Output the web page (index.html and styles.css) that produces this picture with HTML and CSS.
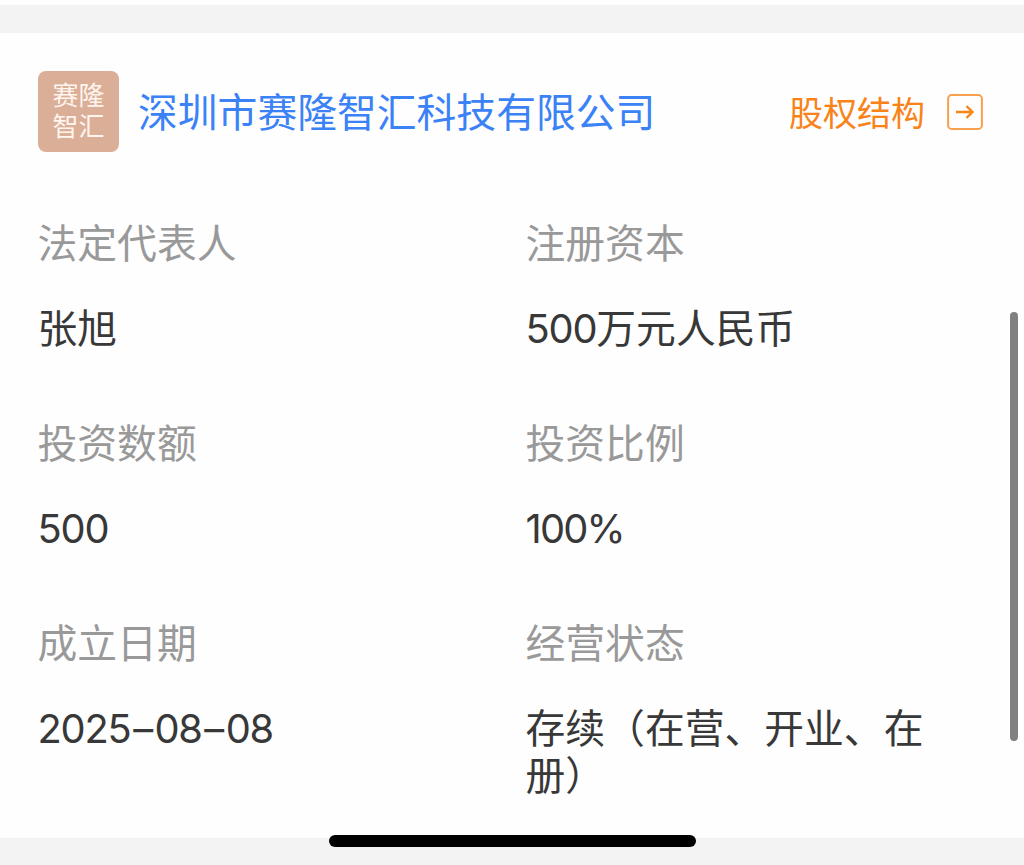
FILE: index.html
```html
<!DOCTYPE html>
<html lang="zh-CN">
<head>
    <meta charset="UTF-8">
    <meta name="viewport" content="width=device-width, initial-scale=1.0">
    <title>深圳市赛隆智汇科技有限公司</title>
    <link rel="stylesheet" href="styles.css">
</head>
<body>
    <div class="separator"></div>

    <main class="card">
        <header class="company">
            <div class="logo">赛隆<br>智汇</div>
            <h1>深圳市赛隆智汇科技有限公司</h1>
            <a class="structure" href="#">
                <span>股权结构</span>
                <svg width="36" height="36" viewBox="0 0 36 36" fill="none" stroke="currentColor">
                    <rect class="frame" x="1.1" y="1.1" width="33.8" height="33.8" rx="3.5" stroke-width="2"/>
                    <path d="M9 18H25.5M19.5 12.2L25.5 18L19.5 23.8" stroke-width="2.3"/>
                </svg>
            </a>
        </header>

        <dl class="details">
            <div class="item">
                <dt>法定代表人</dt>
                <dd>张旭</dd>
            </div>
            <div class="item">
                <dt>注册资本</dt>
                <dd><span class="num">500</span>万元人民币</dd>
            </div>
            <div class="item">
                <dt>投资数额</dt>
                <dd><span class="num">500</span></dd>
            </div>
            <div class="item">
                <dt>投资比例</dt>
                <dd><span class="num percent">100%</span></dd>
            </div>
            <div class="item">
                <dt>成立日期</dt>
                <dd><span class="num">2025<span class="dash">–</span>08<span class="dash">–</span>08</span></dd>
            </div>
            <div class="item">
                <dt>经营状态</dt>
                <dd>存续（在营、开业、在册）</dd>
            </div>
        </dl>
    </main>

    <div class="scrollbar"></div>
    <div class="home-indicator"></div>
</body>
</html>
```
FILE: styles.css
```css
* {
    box-sizing: border-box;
}
body {
    margin: 0;
    height: 865px;
    padding-top: 5px;
    position: relative;
    overflow: hidden;
    background: linear-gradient(#fefefe 5px, #f3f3f3 5px);
    font-family: "Noto Sans CJK SC", sans-serif;
    font-size: 39.8px;
    line-height: 47px;
    color: #383838;
}
.separator {
    height: 28px;
    background: #f3f3f3;
}
.card {
    height: 805px;
    padding: 38px 41px 0 38px;
    background: #fefefe;
}
.company {
    display: flex;
    align-items: center;
    height: 81px;
}
.logo {
    width: 81px;
    height: 81px;
    padding-top: 7px;
    border-radius: 8px;
    background: #dbae97;
    color: #fff5ef;
    font-size: 26px;
    line-height: 31px;
    text-align: center;
}
h1 {
    margin: 0 0 0 19px;
    padding-bottom: 4px;
    font-size: 39.8px;
    font-weight: 400;
    color: #3b82f6;
    white-space: nowrap;
}
.structure {
    display: flex;
    align-items: center;
    gap: 22px;
    margin-left: auto;
    font-size: 34px;
    color: #f98219;
    text-decoration: none;
    white-space: nowrap;
}
.structure .frame {
    stroke: #f9a050;
}
.details {
    display: grid;
    grid-template-columns: 488px 400px;
    row-gap: 68px;
    margin: 65px 0 0 -0.5px;
}
.item {
    display: flex;
    flex-direction: column;
    gap: 38px;
}
dt {
    color: #999;
}
dd {
    margin: 0;
}
.num {
    font-family: Inter, sans-serif;
    letter-spacing: -1.2px;
    line-height: 1;
}
.percent {
    letter-spacing: -1.8px;
}
.dash {
    padding: 0 2.6px;
}
.scrollbar {
    position: absolute;
    top: 312px;
    right: 6px;
    width: 8px;
    height: 429px;
    border-radius: 4px;
    background: #808080;
}
.home-indicator {
    position: absolute;
    left: 329px;
    bottom: 18px;
    width: 367px;
    height: 12px;
    border-radius: 6px;
    background: #000;
}
```
